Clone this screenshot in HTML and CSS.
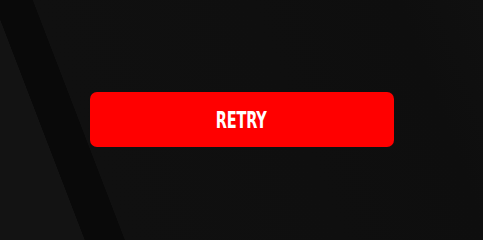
FILE: index.html
```html
<!DOCTYPE html>
<html lang="en">
<head>
<meta charset="utf-8">
<title>Retry</title>
<link rel="stylesheet" href="styles.css">
</head>
<body>
<main class="screen">
  <button class="retry-btn" type="button"><span class="retry-label">RETRY</span></button>
</main>
</body>
</html>
```
FILE: styles.css
```css
html, body {
  margin: 0;
  padding: 0;
  height: 100%;
}
body {
  background: #0f0f0f;
  overflow: hidden;
}
.screen {
  box-sizing: border-box;
  min-height: 100vh;
  display: flex;
  justify-content: center;
  align-items: flex-start;
  padding-top: 92px;
  background-color: #0f0f0f;
  background-image:
    linear-gradient(69deg,
      #131313 0%,
      #131313 15.8%,
      #090909 15.9%,
      #090909 22.7%,
      #101010 22.8%,
      #0f0f0f 60%,
      #0e0e0e 85%,
      #101010 100%);
  background-size: 483px 260px;
  background-repeat: no-repeat;
}
.retry-btn {
  width: 304px;
  height: 55px;
  border: 0;
  border-radius: 7px;
  background: #ff0000;
  color: #ffffff;
  display: flex;
  align-items: center;
  justify-content: center;
  padding: 0;
  cursor: pointer;
}
.retry-label {
  display: inline-block;
  font-family: "DejaVu Sans Condensed", "DejaVu Sans", sans-serif;
  font-stretch: condensed;
  font-weight: bold;
  font-size: 23px;
  line-height: 1;
  letter-spacing: -0.3px;
  transform: scaleX(0.7);
  margin-top: 2px;
}
```
